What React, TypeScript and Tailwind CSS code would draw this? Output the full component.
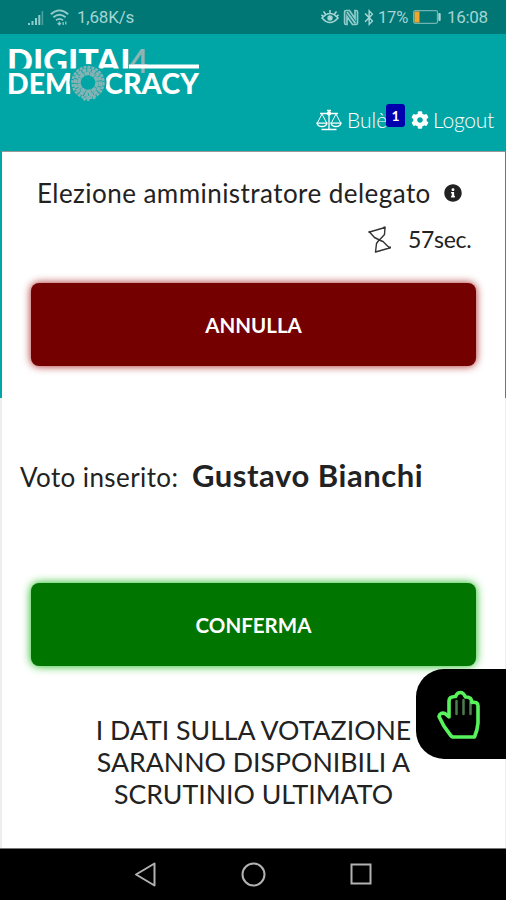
import { type ReactNode } from "react";
import { FaBluetoothB, FaCog, FaInfoCircle } from "react-icons/fa";

/* ── Status bar ── */
function SignalIcon() {
  return (
    <svg width="16" height="16" viewBox="0 0 16 16" fill="#8fcbca">
      <path d="M0 14h2v2H0zM3.5 12h2v4h-2zM7 9h2v7H7zM10.3 6h2v10h-2z" />
      <path d="M13.6 2h1.6v14h-1.6z" opacity=".5" />
    </svg>
  );
}

function WifiIcon() {
  return (
    <svg width="19" height="17" viewBox="0 0 19 17" fill="none" stroke="#8fcbca" strokeWidth="1.8">
      <path d="M.8 5.2Q9.5-2.4 18.2 5.2M3.4 8.3q6.1-5.2 12.2 0M6 11.3q3.5-2.9 7 0" />
      <path d="M9.3 12.5v3M7.7 14l1.6 1.7L11 14M13.2 16v-3M15.8 12.5v3" strokeWidth="1.3" />
    </svg>
  );
}

function EyeIcon() {
  return (
    <svg width="18" height="16" viewBox="0 0 18 16" fill="none" stroke="#a3d5d4" strokeWidth="1.6">
      <path d="M1 9q8-9 16 0q-8 9-16 0zM9 4V1M4.5 5.2 2.5 2.4M13.5 5.2l2-2.8M2 7.2.4 5.8M16 7.2l1.6-1.4" />
      <circle cx="9" cy="9" r="2.7" fill="#a3d5d4" stroke="none" />
    </svg>
  );
}

function NfcIcon() {
  return (
    <svg width="16" height="17" viewBox="0 0 16 17" fill="none" stroke="#8fcbca">
      <path
        d="M1.6 14V3Q1.6 1.5 3 1.5h3.5l5.500 8V1.500h1q1.500 0 1.500 1.500v11q0 1.500-1.500 1.500H9.500L4 7.500v8H3Q1.600 15.500 1.600 14z"
        strokeWidth="1.7"
      />
      <path d="M4 3l8.5 11.5" strokeWidth="2" />
    </svg>
  );
}

function BatteryIcon() {
  return (
    <svg width="28" height="14" viewBox="0 0 28 14">
      <rect x=".7" y=".7" width="23.8" height="12.6" rx="1.5" fill="none" stroke="#6fb4b2" strokeWidth="1.3" />
      <rect x="1.5" y="1.5" width="5" height="11" fill="#f0a52c" />
      <rect x="25.3" y="3" width="2.4" height="8" rx="1" fill="#a3d5d4" />
    </svg>
  );
}

function StatusBar() {
  return (
    <div className="flex h-[34px] shrink-0 items-center bg-[#007774] pr-[18px] pl-7 font-[Roboto] text-[17px] text-[#a3d5d4]">
      <SignalIcon />
      <span className="ml-[6px]">
        <WifiIcon />
      </span>
      <span className="ml-2 w-[58px] pt-[2px] tracking-[-0.2px] whitespace-nowrap">1,68K/s</span>
      <div className="ml-auto flex items-center">
        <EyeIcon />
        <span className="ml-[4px]">
          <NfcIcon />
        </span>
        <FaBluetoothB className="ml-[4px] h-[17px] w-[12px]" />
        <span className="ml-[3px] w-[31px] pt-[2px] text-[16.5px] tracking-[-0.2px]">17%</span>
        <span className="ml-[4px]">
          <BatteryIcon />
        </span>
        <span className="ml-[6px] w-[41px] pt-[2px] tracking-[-0.3px]">16:08</span>
      </div>
    </div>
  );
}

/* ── Header ── */
function Logo() {
  return (
    <svg width="194" height="56" viewBox="0 0 194 56" className="font-[Lato]" fontWeight="900" fill="#fff">
      <defs>
        <clipPath id="top-line">
          <rect x="0" y="0" width="123" height="22.5" />
        </clipPath>
      </defs>
      <g clipPath="url(#top-line)">
        <text x="-1" y="27" fontSize="31.5" textLength="131" lengthAdjust="spacingAndGlyphs">
          DIGITAL
        </text>
      </g>
      <text x="122" y="26.5" fontSize="31.5" fontWeight="700" fill="#91b3b3" textLength="18" lengthAdjust="spacingAndGlyphs">
        4
      </text>
      <rect x="121" y="18.5" width="70" height="4" />
      <text x="-1" y="48" fontSize="29" textLength="65" lengthAdjust="spacingAndGlyphs">
        DEM
      </text>
      <text x="96" y="48" fontSize="29" textLength="95" lengthAdjust="spacingAndGlyphs">
        CRACY
      </text>
      <circle cx="80" cy="36.500" r="18.500" fill="#00a5a5" />
      <g fill="none" stroke="#83b3b4">
        <circle cx="80" cy="36.500" r="9" strokeWidth="3.500" strokeDasharray="5 .5" />
        <circle cx="80" cy="36.500" r="12.500" strokeWidth="3.500" strokeDasharray="4 .8" />
        <circle cx="80" cy="36.500" r="15.500" strokeWidth="2.500" strokeDasharray="3 1" />
        <path d="M76 52l1 2.500M81 50l-1 5M85 49l1.500 4" strokeWidth="2.500" />
      </g>
    </svg>
  );
}

function ScalesIcon() {
  return (
    <svg width="26" height="22" viewBox="0 0 26 22" fill="none" stroke="#fff" strokeWidth="1.3">
      <path d="M13 1v19M11 1.5h4M4 4.5h18M5.5 20.5h15" />
      <path d="M6 5 1.3 14M6 5l4.7 9M20 5l-4.7 9M20 5l4.7 9" strokeWidth="1" />
      <path d="M1 14.2h10q-1 3.3-5 3.3t-5-3.3zM15 14.2h10q-1 3.3-5 3.3t-5-3.3z" />
      <circle cx="13" cy="4.5" r="1.5" fill="#fff" />
    </svg>
  );
}

function Header() {
  return (
    <header className="flex h-[117px] shrink-0 flex-col bg-[#00a5a5] pt-3 text-white">
      <div className="pl-2">
        <Logo />
      </div>
      <nav className="mt-1 flex h-7 items-center self-end pr-3 text-[21px] font-light">
        <ScalesIcon />
        <span className="relative ml-[5px] w-[40px]">
          Bulè
          <span className="absolute top-0 left-[39px] flex h-[23px] w-[19px] items-center justify-center rounded-[3px] bg-[#0000ad] text-[14px] font-bold">
            1
          </span>
        </span>
        <FaCog className="ml-[24px] h-[18px] w-[18px]" />
        <span className="ml-[4px] w-[61px] tracking-[-0.2px]">Logout</span>
      </nav>
    </header>
  );
}

/* ── Vote card ── */
function HourglassIcon() {
  return (
    <svg width="26" height="29" viewBox="0 0 26 29" fill="none" stroke="#333" strokeWidth="1.4" strokeLinejoin="round">
      <path d="M2.500 7 18 2.500l-.5 7-5 5.500-5-2.500zM12 15l4 1.500 6.500 6.500L8.500 27l1-8.500z" />
      <path d="M1.500 7H4M21.500 22.500H24M16.500 2.500h2" strokeWidth="2" />
    </svg>
  );
}

interface VoteButtonProps {
  children: ReactNode;
  className: string;
}

function VoteButton({ children, className }: VoteButtonProps) {
  return (
    <button
      className={`flex h-[83px] w-[445px] items-center justify-center rounded-[8px] pt-[2px] text-[20.5px] font-bold text-white ${className}`}
    >
      {children}
    </button>
  );
}

function HandIcon() {
  return (
    <svg width="46" height="50" viewBox="0 0 46 50" fill="none" strokeLinejoin="round" strokeLinecap="round">
      <path d="M19.5 12v13M26.5 11v14M33.5 13v12" stroke="#4c7b4c" strokeWidth="2.5" />
      <path
        d="M16.5 48h21q3-7 3.5-14V17Q41 12.500 35 13.500 34.500 7.500 28.500 8 26.500 3.500 23.500 3.500 20 3.500 18.500 7.500 12 7.500 12 12v16L8 24.500Q3 23 2 27.500 6 37 13 45.500q1.500 2.500 3.500 2.500z"
        stroke="#58f25c"
        strokeWidth="3.6"
      />
    </svg>
  );
}

/* ── Android navigation ── */
function NavBar() {
  return (
    <div className="flex h-[52px] shrink-0 items-center border-t border-[#777] bg-black">
      <svg width="506" height="50" viewBox="0 0 506 50" fill="none" stroke="#b2b2b2" strokeWidth="2">
        <path d="M136 24.5 154.5 13.5v22z" strokeLinejoin="round" />
        <circle cx="253.5" cy="24.5" r="11" />
        <rect x="351.5" y="14.5" width="19" height="19" />
      </svg>
    </div>
  );
}

export default function App() {
  return (
    <div className="relative flex h-[900px] w-[506px] flex-col overflow-hidden bg-white font-[Lato,sans-serif] text-[#222]">
      <StatusBar />
      <Header />
      <div className="flex h-[697px] shrink-0 bg-[linear-gradient(#00a5a5_247px,#eeeeee_247px)] pr-px pl-[2px]">
        <main className="flex flex-1 flex-col items-center border-t border-[#999] bg-white">
          <div className="mt-[23px] flex h-9 w-full items-center pl-[35px]">
            <h1 className="w-[394px] text-[26px] tracking-[0.45px] whitespace-nowrap">
              Elezione amministratore delegato
            </h1>
            <FaInfoCircle className="ml-[13px] h-[18px] w-[18px]" />
          </div>
          <div className="mt-[12px] flex h-8 w-full items-center justify-end pr-[34px]">
            <HourglassIcon />
            <span className="ml-[15px] w-[63px] text-[23px] tracking-[-0.3px] whitespace-nowrap">57sec.</span>
          </div>
          <VoteButton className="mt-[28px] bg-[#750000] shadow-[0_0_8px_#a51c1c]">ANNULLA</VoteButton>
          <div className="mt-[90px] flex h-10 w-full items-center pl-[18px] whitespace-nowrap">
            <span className="w-[158px] pt-[3px] text-[26px] tracking-[0.4px]">Voto inserito:</span>
            <strong className="ml-[14px] pb-px text-[31px] font-bold tracking-[0.55px]">Gustavo Bianchi</strong>
          </div>
          <VoteButton className="mt-[87px] bg-[#007500] shadow-[0_0_10px_#10b510]">CONFERMA</VoteButton>
          <p className="mt-[48px] text-center text-[26.7px] leading-[32px] whitespace-nowrap">
            I DATI SULLA VOTAZIONE
            <br />
            SARANNO DISPONIBILI A
            <br />
            SCRUTINIO ULTIMATO
          </p>
        </main>
      </div>
      <NavBar />
      <button className="absolute top-[669px] right-0 flex h-[90px] w-[90px] items-center rounded-l-[28px] bg-black pl-[21px]">
        <HandIcon />
      </button>
    </div>
  );
}
